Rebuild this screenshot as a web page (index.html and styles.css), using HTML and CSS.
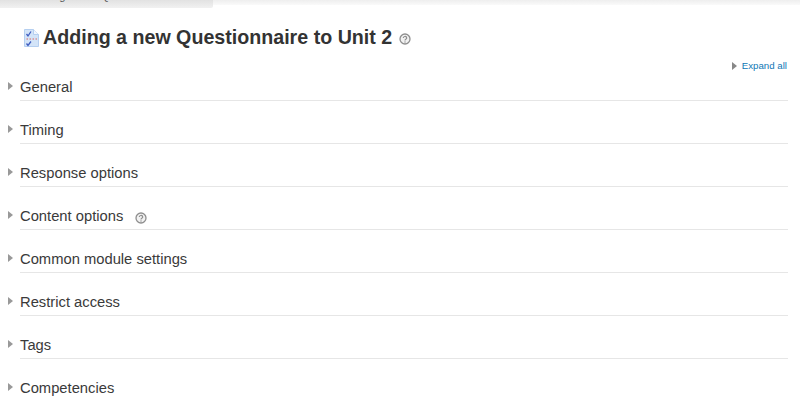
FILE: index.html
```html
<!DOCTYPE html>
<html lang="en">
<head>
<meta charset="utf-8">
<title>Adding a new Questionnaire to Unit 2</title>
<link rel="stylesheet" href="styles.css">
</head>
<body>
<div class="topband"><div class="crumbs"><span class="crumbtext">Adding a new Questionnaire</span></div></div>
<h1 class="title">
  <svg class="modicon" width="15" height="18" viewBox="0 0 15 18">
    <path d="M.5.500h9l5 5v12H.5z" fill="#d3e4f8" stroke="#b5cff0"/>
    <path d="M9.500.500v5h5" fill="#f1f6fd" stroke="#b5cff0"/>
    <path d="M2.500 5l1.500 2L7 2.500M2.500 14.500l1.500 2 3-4" fill="none" stroke="#3f5cc0" stroke-width="1.300"/>
    <path d="M2.500 10h1.500M5.500 10h1.500M8.500 10h1.500M11.500 10h1.500" stroke="#dc6a64" stroke-width="1.200"/>
  </svg>
  <span>Adding a new Questionnaire to Unit 2</span>
  <svg class="help help-title" width="12" height="12" viewBox="0 0 12 12"><use href="#helpicon"/></svg>
</h1>
<div class="expandrow">
  <a class="expand" href="#"><svg class="arrow" width="7" height="10" viewBox="0 0 7 10"><path d="M1 1l5 4-5 4z" fill="#888"/></svg>Expand all</a>
</div>
<section class="row first"><svg class="arrow" width="7" height="10" viewBox="0 0 7 10"><path d="M1 1l5 4-5 4z" fill="#999"/></svg><div class="rowbody"><h3 class="label">General</h3></div></section>
<section class="row"><svg class="arrow" width="7" height="10" viewBox="0 0 7 10"><path d="M1 1l5 4-5 4z" fill="#999"/></svg><div class="rowbody"><h3 class="label">Timing</h3></div></section>
<section class="row"><svg class="arrow" width="7" height="10" viewBox="0 0 7 10"><path d="M1 1l5 4-5 4z" fill="#999"/></svg><div class="rowbody"><h3 class="label">Response options</h3></div></section>
<section class="row"><svg class="arrow" width="7" height="10" viewBox="0 0 7 10"><path d="M1 1l5 4-5 4z" fill="#999"/></svg><div class="rowbody"><h3 class="label">Content options</h3><svg class="help help-row" width="12" height="12" viewBox="0 0 12 12"><use href="#helpicon"/></svg></div></section>
<section class="row"><svg class="arrow" width="7" height="10" viewBox="0 0 7 10"><path d="M1 1l5 4-5 4z" fill="#999"/></svg><div class="rowbody"><h3 class="label">Common module settings</h3></div></section>
<section class="row"><svg class="arrow" width="7" height="10" viewBox="0 0 7 10"><path d="M1 1l5 4-5 4z" fill="#999"/></svg><div class="rowbody"><h3 class="label">Restrict access</h3></div></section>
<section class="row"><svg class="arrow" width="7" height="10" viewBox="0 0 7 10"><path d="M1 1l5 4-5 4z" fill="#999"/></svg><div class="rowbody"><h3 class="label">Tags</h3></div></section>
<section class="row"><svg class="arrow" width="7" height="10" viewBox="0 0 7 10"><path d="M1 1l5 4-5 4z" fill="#999"/></svg><div class="rowbody"><h3 class="label">Competencies</h3></div></section>
<svg width="0" height="0" class="defs"><defs><g id="helpicon"><circle cx="6" cy="6" r="5" fill="#f2f2f2" stroke="#8f8f8f" stroke-width="1.300"/><path d="M4.300 5a1.700 1.500 0 1 1 2.500 1.300c-.6.300-.8.600-.8 1.200" fill="none" stroke="#8f8f8f" stroke-width="1.200"/><circle cx="6" cy="9" r=".7" fill="#8f8f8f"/></g></defs></svg>
</body>
</html>
```
FILE: styles.css
```css
html, body { margin: 0; padding: 0; background: #fff; overflow: hidden; }
body { width: 800px; height: 400px; font-family: "Liberation Sans", Arial, sans-serif; color: #333; }
.topband { height: 5px; background: linear-gradient(#eeeeee, #fafafa); }
.crumbs { width: 213px; height: 8px; background: linear-gradient(#e2e2e2, #f1f1f1); border-radius: 0 0 2px 0; overflow: hidden; }
.crumbtext { display: block; font-size: 11px; line-height: 11px; color: #555; margin: -9px 0 0 31px; white-space: nowrap; }
.title { margin: 0; padding: 18px 0 0 24px; height: 29px; display: flex; align-items: center; font-size: 19.650px; line-height: 29px; font-weight: 700; color: #333; }
.modicon { margin-right: 4px; flex: none; }
.help-title { margin-left: 7px; margin-top: 2px; }
.expandrow { display: flex; justify-content: flex-end; padding: 6px 13px 0 0; height: 13px; margin-top: 1px; }
.expand { display: flex; align-items: center; font-size: 9.700px; line-height: 13px; color: #0f77b5; text-decoration: none; }
.expand .arrow { margin-right: 4px; }
.row { box-sizing: border-box; height: 43px; margin: 0 12px 0 7px; display: flex; align-items: flex-end; }
.row.first { height: 29px; }
.row .arrow { flex: none; margin: 0 6px 10px 0; }
.rowbody { flex: 1; display: flex; align-items: center; height: 23px; padding-bottom: 4px; box-sizing: border-box; border-bottom: 1px solid #e6e6e6; }
.label { margin: 0; font-size: 14.750px; font-weight: 400; line-height: 17px; color: #3a3a3a; }
.defs { position: absolute; }
.help-row { margin-left: 12px; margin-top: 4px; }
```
